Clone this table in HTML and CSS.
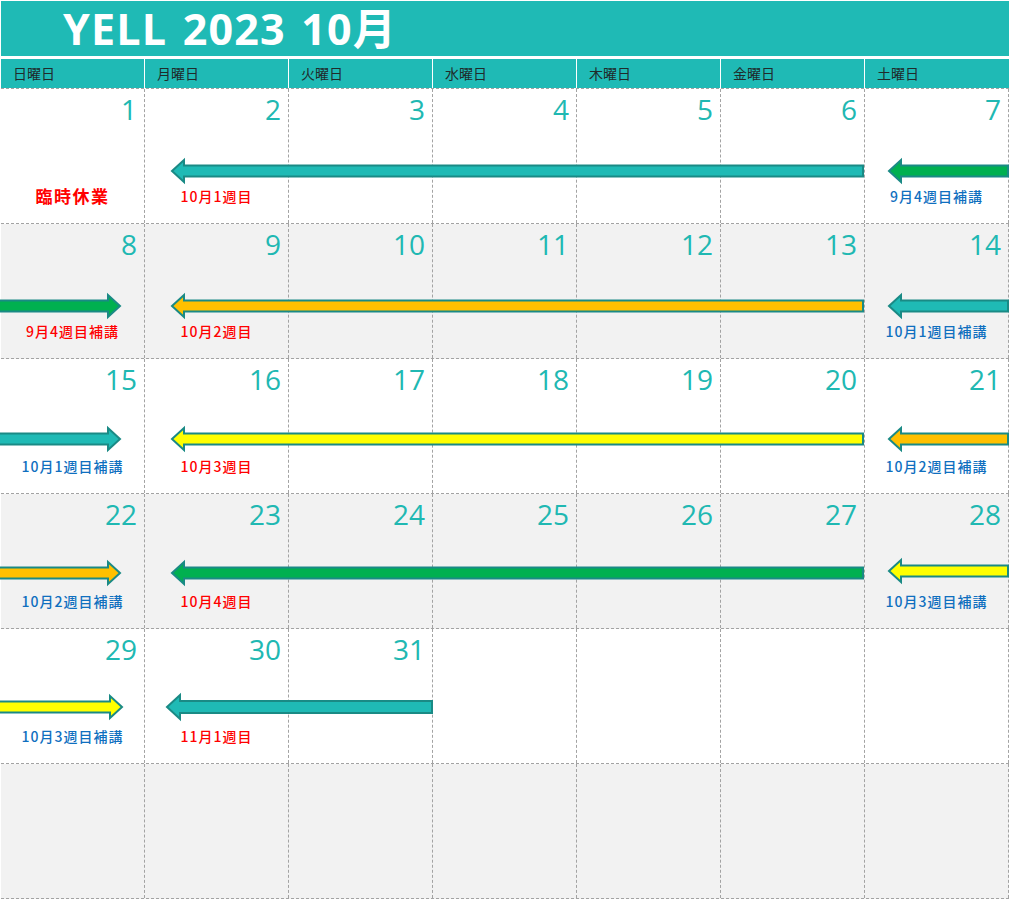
FILE: index.html
```html
<!DOCTYPE html>
<html lang="ja">
<head>
<meta charset="utf-8">
<title>YELL 2023 10月</title>
<link rel="stylesheet" href="styles.css">
</head>
<body>
<div class="cal">
  <div class="title">YELL 2023 10月</div>
  <div class="dow">
    <div>日曜日</div><div>月曜日</div><div>火曜日</div><div>水曜日</div><div>木曜日</div><div>金曜日</div><div>土曜日</div>
  </div>
  <div class="weeks">
    <div class="week w1">
      <div class="day"><span class="num">1</span><span class="lbl closed">臨時休業</span></div>
      <div class="day"><span class="num">2</span><span class="lbl red">10月1週目</span></div>
      <div class="day"><span class="num">3</span></div>
      <div class="day"><span class="num">4</span></div>
      <div class="day"><span class="num">5</span></div>
      <div class="day"><span class="num">6</span></div>
      <div class="day"><span class="num">7</span><span class="lbl blue">9月4週目補講</span></div>
      <svg class="arrow a-week teal" width="694" height="24"><polygon points="1,12 13,1 13,6.5 692,6.5 692,17.5 13,17.5 13,23"/></svg>
      <svg class="arrow a-sat green" width="121" height="24"><polygon points="1,12 13,1 13,6.5 120,6.5 120,17.5 13,17.5 13,23"/></svg>
    </div>
    <div class="week w2 shade">
      <div class="day"><span class="num">8</span><span class="lbl red">9月4週目補講</span></div>
      <div class="day"><span class="num">9</span><span class="lbl red">10月2週目</span></div>
      <div class="day"><span class="num">10</span></div>
      <div class="day"><span class="num">11</span></div>
      <div class="day"><span class="num">12</span></div>
      <div class="day"><span class="num">13</span></div>
      <div class="day"><span class="num">14</span><span class="lbl blue">10月1週目補講</span></div>
      <svg class="arrow a-sun green" width="121" height="24"><polygon points="-3,6.5 107,6.5 107,1 119,12 107,23 107,17.5 -3,17.5"/></svg>
      <svg class="arrow a-week orange" width="694" height="24"><polygon points="1,12 13,1 13,6.5 692,6.5 692,17.5 13,17.5 13,23"/></svg>
      <svg class="arrow a-sat teal" width="121" height="24"><polygon points="1,12 13,1 13,6.5 120,6.5 120,17.5 13,17.5 13,23"/></svg>
    </div>
    <div class="week w3">
      <div class="day"><span class="num">15</span><span class="lbl blue">10月1週目補講</span></div>
      <div class="day"><span class="num">16</span><span class="lbl red">10月3週目</span></div>
      <div class="day"><span class="num">17</span></div>
      <div class="day"><span class="num">18</span></div>
      <div class="day"><span class="num">19</span></div>
      <div class="day"><span class="num">20</span></div>
      <div class="day"><span class="num">21</span><span class="lbl blue">10月2週目補講</span></div>
      <svg class="arrow a-sun teal" width="121" height="24"><polygon points="-3,6.5 107,6.5 107,1 119,12 107,23 107,17.5 -3,17.5"/></svg>
      <svg class="arrow a-week yellow" width="694" height="24"><polygon points="1,12 13,1 13,6.5 692,6.5 692,17.5 13,17.5 13,23"/></svg>
      <svg class="arrow a-sat orange" width="121" height="24"><polygon points="1,12 13,1 13,6.5 120,6.5 120,17.5 13,17.5 13,23"/></svg>
    </div>
    <div class="week w4 shade">
      <div class="day"><span class="num">22</span><span class="lbl blue">10月2週目補講</span></div>
      <div class="day"><span class="num">23</span><span class="lbl red">10月4週目</span></div>
      <div class="day"><span class="num">24</span></div>
      <div class="day"><span class="num">25</span></div>
      <div class="day"><span class="num">26</span></div>
      <div class="day"><span class="num">27</span></div>
      <div class="day"><span class="num">28</span><span class="lbl blue">10月3週目補講</span></div>
      <svg class="arrow a-sun orange" width="121" height="24"><polygon points="-3,6.5 107,6.5 107,1 119,12 107,23 107,17.5 -3,17.5"/></svg>
      <svg class="arrow a-week green" width="694" height="24"><polygon points="1,12 13,1 13,6.5 692,6.5 692,17.5 13,17.5 13,23"/></svg>
      <svg class="arrow a-sat yellow" width="121" height="24"><polygon points="1,12 13,1 13,6.5 120,6.5 120,17.5 13,17.5 13,23"/></svg>
    </div>
    <div class="week w5">
      <div class="day"><span class="num">29</span><span class="lbl blue">10月3週目補講</span></div>
      <div class="day"><span class="num">30</span><span class="lbl red">11月1週目</span></div>
      <div class="day"><span class="num">31</span></div>
      <div class="day"></div>
      <div class="day"></div>
      <div class="day"></div>
      <div class="day"></div>
      <svg class="arrow a-sun yellow" width="123" height="24"><polygon points="-3,6.5 109,6.5 109,1 121,12 109,23 109,17.5 -3,17.5"/></svg>
      <svg class="arrow a-short teal" width="268" height="26"><polygon points="1,13 14,1 14,7 266,7 266,19 14,19 14,25"/></svg>
    </div>
    <div class="week w6 shade">
      <div class="day"></div>
      <div class="day"></div>
      <div class="day"></div>
      <div class="day"></div>
      <div class="day"></div>
      <div class="day"></div>
      <div class="day"></div>
    </div>
  </div>
</div>
</body>
</html>
```

FILE: styles.css
```css
body {
  margin: 0;
  background: #ffffff;
}

.cal {
  width: 1008px;
  padding: 1px 0 0 1px;
}

.title {
  height: 55px;
  box-sizing: border-box;
  background: #1fbab5;
  color: #ffffff;
  font-family: "Open Sans", "Noto Sans CJK JP", sans-serif;
  font-weight: 700;
  font-size: 43px;
  line-height: 55px;
  letter-spacing: 1.2px;
  word-spacing: 3px;
  padding-left: 62px;
  white-space: nowrap;
}

.dow {
  margin-top: 3px;
  display: grid;
  grid-template-columns: repeat(7, 144px);
  height: 29px;
}

.dow div {
  background: #1fbab5;
  border-right: 1px solid #ffffff;
  box-sizing: border-box;
  padding-left: 12px;
  font-family: "Noto Sans CJK JP", sans-serif;
  font-size: 14px;
  line-height: 29px;
  color: #1f2b2b;
}

.dow div:last-child {
  border-right: none;
}

.weeks {
  border-top: 1px dashed #a3a3a3;
}

.week {
  position: relative;
  display: grid;
  grid-template-columns: repeat(7, 144px);
  height: 135px;
  box-sizing: border-box;
  border-bottom: 1px dashed #a3a3a3;
  background: #ffffff;
}

.week.shade {
  background: #f2f2f2;
}

.day {
  display: flex;
  flex-direction: column;
  border-right: 1px dashed #a3a3a3;
  box-sizing: border-box;
}

.num {
  display: block;
  text-align: right;
  padding: 6px 7px 0 0;
  font-family: "Open Sans", sans-serif;
  font-size: 28px;
  line-height: 28px;
  color: #20b8b2;
}

.lbl {
  display: block;
  margin-top: auto;
  margin-bottom: 17px;
  text-align: center;
  font-family: "Noto Sans CJK JP", sans-serif;
  font-size: 14px;
  line-height: 20px;
  font-weight: 500;
  letter-spacing: 1px;
}

.lbl.red {
  color: #ff0000;
}

.lbl.blue {
  color: #0f6fbf;
}

.lbl.closed {
  color: #ff0000;
  font-size: 17px;
  font-weight: 700;
  letter-spacing: 1.5px;
}

.arrow {
  position: absolute;
  overflow: visible;
}

.arrow polygon {
  stroke: #1a8a85;
  stroke-width: 2;
  stroke-linejoin: miter;
}

.teal polygon { fill: #1fbab5; }
.green polygon { fill: #00b050; }
.orange polygon { fill: #ffc000; }
.yellow polygon { fill: #ffff00; }

.a-week { left: 170px; top: 70px; }
.a-sat { left: 887px; top: 70px; }
.a-sun { left: 0; top: 70px; }
.a-short { left: 165px; top: 65px; }

.w3 .arrow { top: 68px; }
.w4 .arrow { top: 67px; }
.w4 .a-sat { top: 65px; }
.w5 .a-sun { top: 66px; }
.w5 .a-short { top: 65px; }
```
